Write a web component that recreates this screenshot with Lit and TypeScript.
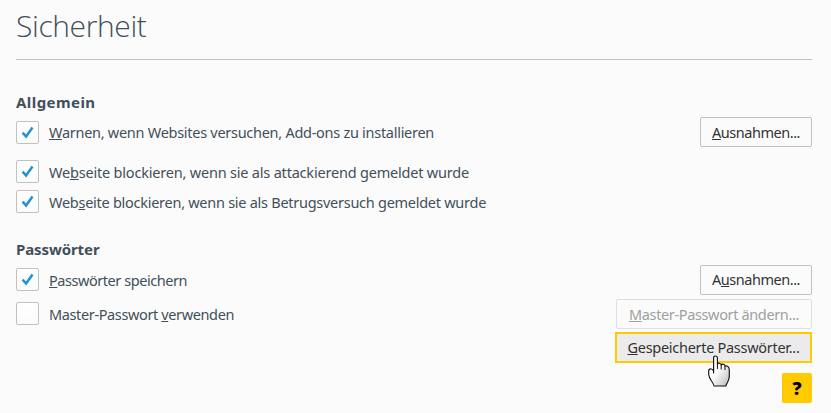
import { LitElement, html, css, svg, nothing } from "lit";
import { customElement, property } from "lit/decorators.js";
import { styleMap } from "lit/directives/style-map.js";

const pen = document.createElement("canvas").getContext("2d")!;

/** Letter spacing that makes `text` take up `width` pixels in `font`. */
function tracking(text: string, font: string, width: number) {
  pen.font = font;
  return { letterSpacing: `${((width - pen.measureText(text).width) / text.length).toFixed(3)}px` };
}

const BODY = '14.5px "Noto Sans"';
const TITLE = '360 30px "Open Sans"';
const HEADING = 'bold 15px "Noto Sans"';

/** Text with its access key underlined; "_" precedes the key letter. */
function keyed(label: string, width: number) {
  const at = label.indexOf("_");
  const plain = label.replace("_", "");
  return html`<span class="text" style=${styleMap(tracking(plain, BODY, width))}>${plain.slice(0, at)}<u>${plain[at]}</u>${plain.slice(at + 1)}</span>`;
}

@customElement("pref-check")
class PrefCheck extends LitElement {
  @property() label = "";
  @property({ type: Number }) width = 0;
  @property({ type: Boolean }) checked = false;
  static styles = css`
    :host { display: flex; gap: 10px; height: 23px; color: #424f5a; }
    .box {
      box-sizing: border-box; width: 23px; height: 23px; flex: none;
      border: 1px solid #c1c1c1; border-radius: 2px;
      background: linear-gradient(#fff, #fbfbfb);
    }
    .box svg { display: block; width: 21px; height: 21px; }
    .text { white-space: pre; line-height: 25px; }
    :host(.first) .text { line-height: 23px; }
    u { text-decoration: underline 1px; text-underline-offset: 1px; text-decoration-skip-ink: none; }
  `;
  render() {
    return html`<span class="box">${this.checked
        ? html`<svg viewBox="0 0 21 21">${svg`<path d="M5.600 10.600L9.100 14.500L15.500 5.500" fill="none" stroke="#2292d0" stroke-width="2.500"/>`}</svg>`
        : nothing}</span>${keyed(this.label, this.width)}`;
  }
}

@customElement("pref-button")
class PrefButton extends LitElement {
  @property() label = "";
  @property({ type: Number }) width = 0;
  static styles = css`
    :host {
      box-sizing: border-box; display: flex; justify-content: center;
      width: 112px; height: 30px; border: 1px solid #c1c1c1; border-radius: 2px;
      background: #fbfbfb; color: #333;
    }
    :host([disabled]) { width: 196px; border-color: #dfdfdf; color: #a0a0a0; }
    :host([hot]) { width: 197px; height: 31px; border: 2px solid #ffcb00; border-radius: 0; background: #ebebeb; }
    .text { white-space: pre; line-height: 28px; }
    :host(.raised) .text { line-height: 26px; }
    :host([hot]) .text { line-height: 27px; }
    u { text-decoration: underline 1px; text-underline-offset: 1px; text-decoration-skip-ink: none; }
  `;
  render() {
    return keyed(this.label, this.width);
  }
}

@customElement("app-root")
class AppRoot extends LitElement {
  static styles = css`
    :host {
      box-sizing: border-box; display: block; position: relative; width: 831px; height: 413px;
      padding: 0 19px 0 16px; background: #fbfbfb; color: #424f5a; overflow: hidden;
      font: 14.5px "Noto Sans", sans-serif;
    }
    h1 {
      margin: 0; height: 59px; border-bottom: 1px solid #c1c1c1;
      font: 360 30px/52px "Open Sans", sans-serif;
    }
    h2 { margin: 0; height: 20px; font: 700 15px/19px "Noto Sans", sans-serif; }
    section { display: flex; justify-content: space-between; }
    .checks, .buttons { display: flex; flex-direction: column; }
    .buttons { align-items: flex-end; }
    .general { padding-top: 33px; height: 147px; }
    .passwords { height: 133px; }
    .general .checks { padding-top: 8px; gap: 7px; }
    .general .first { margin-bottom: 9px; }
    .general .buttons { padding-top: 24px; }
    .passwords .checks { padding-top: 8px; gap: 11px; }
    .passwords .buttons { padding-top: 25px; gap: 4px; }
    .passwords .last { margin-top: -1px; }
    .help {
      width: 30px; height: 30px; margin: 0 0 0 auto; border-radius: 2px;
      background: #ffcb00; color: #000; text-align: center;
      font: 800 18px/30px "Open Sans", sans-serif;
    }
    .pointer { position: absolute; left: 707px; top: 355px; width: 24px; height: 33px; }
  `;
  render() {
    return html`
      <h1 style=${styleMap(tracking("Sicherheit", TITLE, 130.5))}>Sicherheit</h1>
      <section class="general">
        <div>
          <h2 style=${styleMap(tracking("Allgemein", HEADING, 79.5))}>Allgemein</h2>
          <div class="checks">
            <pref-check class="first" checked label="_Warnen, wenn Websites versuchen, Add-ons zu installieren" width="385"></pref-check>
            <pref-check checked label="We_bseite blockieren, wenn sie als attackierend gemeldet wurde" width="420"></pref-check>
            <pref-check checked label="Web_seite blockieren, wenn sie als Betrugsversuch gemeldet wurde" width="437"></pref-check>
          </div>
        </div>
        <div class="buttons"><pref-button label="_Ausnahmen..." width="88"></pref-button></div>
      </section>
      <section class="passwords">
        <div>
          <h2 style=${styleMap(tracking("Passwörter", HEADING, 83.5))}>Passwörter</h2>
          <div class="checks">
            <pref-check checked label="_Passwörter speichern" width="138"></pref-check>
            <pref-check label="Master-Passwort _verwenden" width="185"></pref-check>
          </div>
        </div>
        <div class="buttons">
          <pref-button class="raised" label="A_usnahmen..." width="88"></pref-button>
          <pref-button disabled label="_Master-Passwort ändern..." width="170"></pref-button>
          <pref-button class="last" hot label="_Gespeicherte Passwörter..." width="172"></pref-button>
        </div>
      </section>
      <div class="help">?</div>
      <svg class="pointer" viewBox="0 0 24 33">
        <defs><linearGradient id="g" x1="0" y1="0" x2="1" y2="1"><stop offset=".45" stop-color="#fff"/><stop offset="1" stop-color="#b8b8b8"/></linearGradient></defs>
        <path d="M6.600 18V3Q6.600 1 8.500 1Q10.400 1 10.400 3V9Q11 8 12.400 8.200Q14.200 8.500 14.200 10Q15.200 8.900 16.500 9.200Q18 9.600 18 11Q19.400 10.300 20.600 11.300Q22.300 12.500 22.300 15V21Q22.300 24.500 20.700 27Q19.500 29 18.800 31H7Q6.500 28.500 4.500 26Q2 22.500 1.700 19.500V16Q1.800 13.800 3.500 13.800Q5.300 13.900 6.600 16Z" fill="url(#g)" stroke="#111" stroke-width="1.150" stroke-linejoin="round"/>
        <path d="M10.400 9V14M14.200 10V14.500M18 11V15" fill="none" stroke="#111" stroke-width="1"/>
      </svg>
    `;
  }
}
